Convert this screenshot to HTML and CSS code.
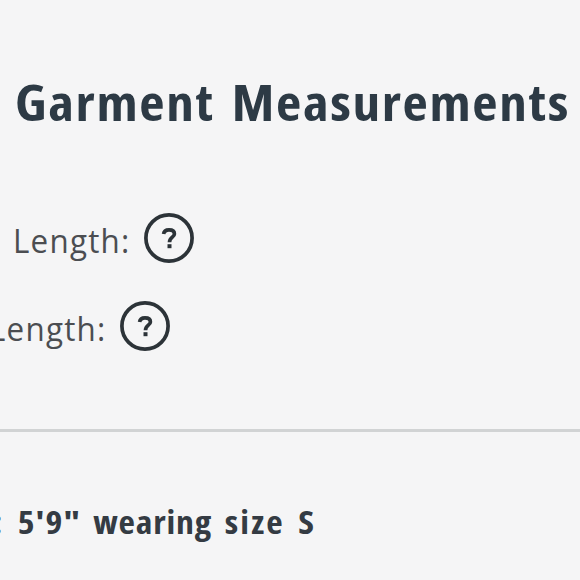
FILE: index.html
```html
<!DOCTYPE html>
<html lang="en">
  <head>
    <meta charset="UTF-8" />
    <meta name="viewport" content="width=device-width, initial-scale=1.0" />
    <title>Garment Measurements</title>
    <link rel="stylesheet" href="styles.css">
  </head>
  <body>
    <main class="panel">
      <h1>Garment Measurements</h1>

      <div class="row row-first">
        <span class="label">Length:</span>
        <svg class="help" viewBox="0 0 50 50">
          <circle cx="25" cy="25" r="23.1" />
          <path d="M19.6 21.1C20 17.9 22.1 16.8 25 16.8C28.3 16.8 30.4 18.3 30.4 20.9C30.4 24.4 25.5 24.1 25.5 29.2" />
          <rect x="23.5" y="31.2" width="4" height="4" />
        </svg>
      </div>
      <div class="row row-second">
        <span class="label">Length:</span>
        <svg class="help" viewBox="0 0 50 50">
          <circle cx="25" cy="25" r="23.1" />
          <path d="M19.6 21.1C20 17.9 22.1 16.8 25 16.8C28.3 16.8 30.4 18.3 30.4 20.9C30.4 24.4 25.5 24.1 25.5 29.2" />
          <rect x="23.5" y="31.2" width="4" height="4" />
        </svg>
      </div>

      <hr />

      <p class="model"><span class="colon">:</span><span class="height">5'9"</span><span class="wearing">wearing</span><span class="size">size</span><span>S</span></p>
    </main>
  </body>
</html>
```

FILE: styles.css
```css
body {
  margin: 0;
  height: 580px;
  overflow: hidden;
  background-color: #f5f5f6;
  color: #2d3a45;
  font-family: "Open Sans", sans-serif;
}

.panel {
  display: flex;
  flex-direction: column;
  white-space: nowrap;
}

/* Title */
h1 {
  width: 500px;
  margin: 67px 0 0 15px;
  font-size: 50px;
  line-height: 70px;
  font-weight: 700;
  font-stretch: 75%;
  letter-spacing: 1.5px;
  word-spacing: 5px;
  transform: scaleX(1.104);
  transform-origin: left;
}

/* Measurement rows */
.row {
  display: flex;
  align-items: center;
  height: 50px;
}

.row-first {
  margin: 76px 0 0 13px;
}

.row-second {
  margin: 38px 0 0 -11px;
}

.label {
  width: 131px;
  padding-top: 5px;
  color: #4b4d51;
  font-size: 33px;
  line-height: 45px;
  letter-spacing: 1.3px;
  transform: scaleX(0.95);
  transform-origin: left;
}

.help {
  flex: none;
  width: 50px;
  height: 50px;
  fill: none;
  stroke: #2c3338;
  stroke-width: 3.7;
}

.help rect {
  fill: #2c3338;
  stroke: none;
}

hr {
  width: 100%;
  height: 3px;
  margin: 78px 0 0;
  border: 0;
  background-color: #d1d3d4;
}

/* Model info */
.model {
  display: flex;
  width: 500px;
  margin: 67px 0 0 -7px;
  color: #343b43;
  font-size: 32px;
  line-height: 46px;
  font-weight: 700;
  font-stretch: 75%;
  letter-spacing: 1.2px;
  transform: scaleX(1.12);
  transform-origin: left;
}

.colon {
  width: 22px;
}

.height {
  width: 67.5px;
}

.wearing {
  width: 117.5px;
  letter-spacing: 0.7px;
}

.size {
  width: 65.5px;
  letter-spacing: 1.9px;
}
```
